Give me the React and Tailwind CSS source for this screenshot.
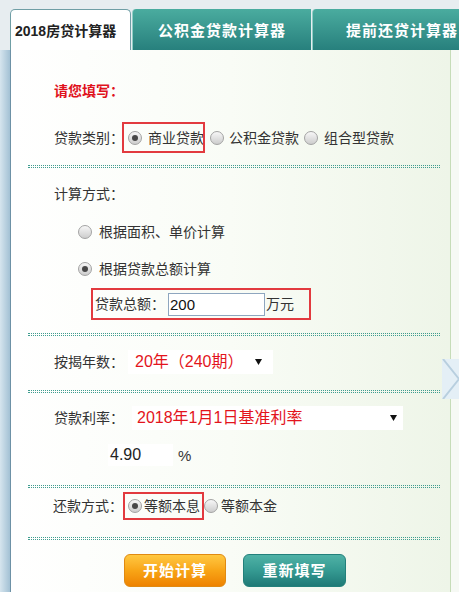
import React from "react";

const FONT = { fontFamily: '"Liberation Sans", "Noto Sans CJK SC", sans-serif' };

function Radio({ checked }) {
  return (
    <span className="w-[14px] h-[14px] shrink-0 rounded-full border border-[#a3a3a3] bg-gradient-to-b from-[#f7f7f7] to-[#cdcdcd] flex items-center justify-center">
      {checked && <span className="w-[6px] h-[6px] rounded-full bg-[#474747]" />}
    </span>
  );
}

function Dots({ className = "" }) {
  return (
    <div className={"ml-[17px] w-[412px] h-[3px] border-y border-dotted border-[#3f9d8f] " + className} />
  );
}

function Tri() {
  return (
    <svg width="7" height="6" viewBox="0 0 7 6" className="shrink-0">
      <path d="M0 0 H7 L3.5 6 Z" fill="#111" />
    </svg>
  );
}

export default function App() {
  return (
    <div
      className="relative w-[459px] h-[592px] overflow-hidden bg-[#e7edf0] flex flex-col text-[#333]"
      style={FONT}
    >
      {/* tabs */}
      <div className="h-[9px] shrink-0" />
      <div className="flex h-[41px] shrink-0 pl-[10px]">
        <div className="w-[121px] shrink-0 bg-white border border-b-0 border-[#6f9ea5] rounded-t-[5px] flex items-center pl-[4px] pt-[2px] text-[14px] font-bold text-[#222] leading-none whitespace-nowrap">
          2018房贷计算器
        </div>
        <div className="w-[179px] shrink-0 ml-[1px] rounded-tl-[4px] bg-gradient-to-b from-[#4aac9f] to-[#27807d] border-l border-[#8fcfc6] flex items-center justify-center pt-[2px] text-white text-[15px] font-bold tracking-[1px] leading-none whitespace-nowrap">
          公积金贷款计算器
        </div>
        <div className="w-[179px] shrink-0 ml-[1px] rounded-tl-[4px] bg-gradient-to-b from-[#4aac9f] to-[#27807d] border-l border-[#8fcfc6] flex items-center pl-[33px] pt-[2px] text-white text-[15px] font-bold tracking-[1px] leading-none whitespace-nowrap">
          提前还贷计算器
        </div>
      </div>

      {/* body */}
      <div className="flex flex-1">
        <div className="w-[11px] shrink-0 bg-gradient-to-r from-[#d6e5ee] to-[#a3c1d4] border-r border-[#6d91a6]" />
        <div className="w-[440px] shrink-0 border-r border-[#c6dcb8] bg-gradient-to-r from-[#ffffff] via-[#f9fcf6] to-[#eef5e8] flex flex-col text-[14px] leading-none">
          {/* 请您填写 */}
          <div className="mt-[30px] h-[22px] ml-[43px] flex items-center text-[14px] font-bold text-[#e0121c]">
            请您填写：
          </div>

          {/* 贷款类别 */}
          <div className="relative mt-[20px] h-[31px] ml-[43px] flex items-center whitespace-nowrap">
            <span>贷款类别：</span>
            <span className="ml-[4px]"><Radio checked /></span>
            <span className="ml-[6px]">商业贷款</span>
            <span className="ml-[6px]"><Radio /></span>
            <span className="ml-[5px]">公积金贷款</span>
            <span className="ml-[5px]"><Radio /></span>
            <span className="ml-[6px]">组合型贷款</span>
            <div className="absolute left-[68px] top-0 w-[83px] h-[31px] border-2 border-[#e23a3f]" />
          </div>

          <Dots className="mt-[12px]" />

          {/* 计算方式 */}
          <div className="mt-[15px] h-[22px] ml-[43px] flex items-center">计算方式：</div>
          <div className="mt-[16px] h-[22px] ml-[67px] flex items-center">
            <Radio />
            <span className="ml-[7px]">根据面积、单价计算</span>
          </div>
          <div className="mt-[15px] h-[22px] ml-[67px] flex items-center">
            <Radio checked />
            <span className="ml-[7px]">根据贷款总额计算</span>
          </div>
          <div className="mt-[8px] h-[32px] ml-[80px] w-[220px] border-2 border-[#e23a3f] flex items-center pl-[2px] whitespace-nowrap">
            <span>贷款总额：</span>
            <div className="ml-[3px] w-[97px] h-[23px] border border-[#8ea6bf] bg-white flex items-center pl-[1px] text-[15px] text-[#111]">
              200
            </div>
            <span className="ml-[1px]">万元</span>
          </div>

          <Dots className="mt-[13px]" />

          {/* 按揭年数 */}
          <div className="mt-[14px] h-[24px] ml-[43px] flex items-center whitespace-nowrap">
            <span>按揭年数：</span>
            <div className="ml-[4px] w-[145px] h-[24px] bg-white flex items-center justify-between pl-[7px] pr-[11px] text-[16px] text-[#e3141c]">
              <span>20年（240期）</span>
              <Tri />
            </div>
          </div>

          <Dots className="mt-[16px]" />

          {/* 贷款利率 */}
          <div className="mt-[13px] h-[24px] ml-[43px] flex items-center whitespace-nowrap">
            <span>贷款利率：</span>
            <div className="ml-[8px] w-[271px] h-[24px] bg-white flex items-center justify-between pl-[5px] pr-[6px] text-[16px] text-[#e3141c]">
              <span>2018年1月1日基准利率</span>
              <Tri />
            </div>
          </div>
          <div className="mt-[14px] h-[22px] ml-[97px] flex items-center">
            <div className="w-[65px] h-[22px] bg-white flex items-center pl-[2px] text-[16px] text-[#222]">4.90</div>
            <span className="ml-[5px] text-[15px]">%</span>
          </div>

          <Dots className="mt-[19px]" />

          {/* 还款方式 */}
          <div className="relative mt-[4px] h-[28px] ml-[42px] flex items-center whitespace-nowrap">
            <span>还款方式：</span>
            <span className="ml-[5px]"><Radio checked /></span>
            <span className="ml-[2px]">等额本息</span>
            <span className="ml-[4px]"><Radio /></span>
            <span className="ml-[3px]">等额本金</span>
            <div className="absolute left-[70px] top-0 w-[81px] h-[28px] border-2 border-[#e23a3f]" />
          </div>

          <Dots className="mt-[17px]" />

          {/* buttons */}
          <div className="mt-[14px] ml-[113px] flex gap-[17px]">
            <div className="w-[102px] h-[33px] rounded-[6px] border border-[#e08a12] bg-gradient-to-b from-[#ffc83f] via-[#f8a516] to-[#ee8200] flex items-center justify-center text-white text-[15px] font-bold tracking-[1px]">
              开始计算
            </div>
            <div className="w-[103px] h-[33px] rounded-[6px] border border-[#23807b] bg-gradient-to-b from-[#4fb2a6] via-[#359a92] to-[#1f7a77] flex items-center justify-center text-white text-[15px] font-bold tracking-[1px]">
              重新填写
            </div>
          </div>
        </div>
        <div className="flex-1 bg-[#f6f9f4]" />
      </div>

      {/* side arrow */}
      <div className="absolute left-[442px] top-[359px] w-[17px] h-[40px] bg-[#e4eff6]">
        <svg width="17" height="40" viewBox="0 0 17 40">
          <path d="M1 0 L17 20 L1 40" fill="none" stroke="#b8cfdf" strokeWidth="2" />
        </svg>
      </div>
    </div>
  );
}
